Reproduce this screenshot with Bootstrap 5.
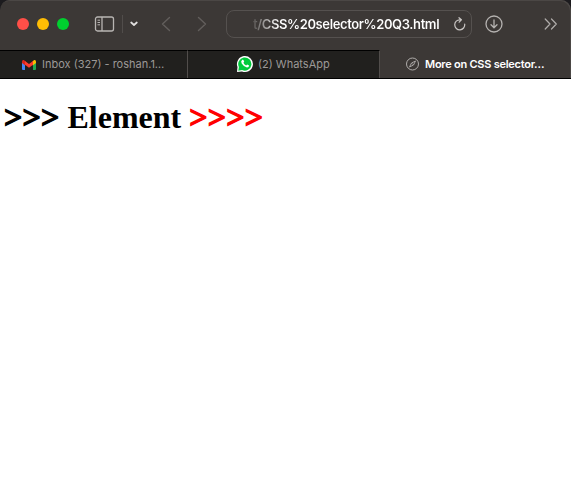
<!DOCTYPE html>
<html lang="en">
<head>
<meta charset="utf-8">
<meta name="viewport" content="width=device-width, initial-scale=1">
<title>More on CSS selector</title>
<link href="https://cdn.jsdelivr.net/npm/bootstrap@5.3.0/dist/css/bootstrap.min.css" rel="stylesheet">
<style>
body{font-family:Inter,"Liberation Sans",sans-serif;background:#fff;overflow:hidden}
svg{display:block;flex:none}
.shell{background:#1c1b1e}
.toolbar{height:50px;background:#3c3836;border-radius:10px 10px 0 0;padding:0 0 3px 17px;box-shadow:inset -1px 1px 0 #4b4745}
.dot{width:12px;height:12px;border-radius:50%;margin-right:8px}
.red{background:#ff4f48}.yellow{background:#ffbd04}.green{background:#00d02f}
.sidebar-icon{margin-left:16px}
.sep{width:1px;height:18px;background:#514d4b;margin-left:7px}
.chev{margin-left:7px}
.arrows{margin-left:-1px}
.address{width:246px;height:28px;border:1px solid #55514f;border-radius:8px;margin-left:19px;padding:0 5px 0 26px}
.url{font-size:13px;line-height:28px;font-weight:600;letter-spacing:-.39px;white-space:pre;color:transparent;background:linear-gradient(90deg,rgba(255,255,255,.12),#fff 26px);-webkit-background-clip:text;background-clip:text}
.down{margin-left:13px}
.more{margin-left:41px}
.tabs{height:29px;background:#3c3836;border-bottom:1px solid #000}
.tabitem{font-size:11px;line-height:27px;height:28px;color:#9c9997;white-space:pre}
.idle{background:#21201e;border-top:1px solid #000;border-right:1px solid #514d4b}
.label{margin-left:5px}
.t1{width:188px;padding-left:21px}
.t2{width:192px;padding-left:47px}
.t2 svg{margin:-1px 0 0 1px}
.t2 .label{margin-left:4px}
.t3{padding-left:26px;color:#fff;font-weight:600;padding-top:1px;border-right:1px solid #4b4745}
.t3 svg{margin-top:-2px}
.t3 .label{letter-spacing:-.25px}
.headline{font:bold 32px/37px "Liberation Serif","Times New Roman",serif;color:#000;margin:20px 0 0 4px;white-space:pre}
.gt{-webkit-text-stroke:1.3px currentColor;letter-spacing:.25px}
.after{color:#f00}
</style>
</head>
<body>
<header class="shell">
  <div class="toolbar d-flex align-items-center">
    <span class="dot red"></span><span class="dot yellow"></span><span class="dot green"></span>
    <svg class="sidebar-icon" width="22" height="16" viewBox="0 0 22 16" fill="none" stroke="#b8b5b3" stroke-width="1.3"><rect x="2.5" y="1" width="18" height="14" rx="2"/><path d="M9 1v14"/><path stroke-width="1" d="M4.5 4.2H7M4.5 6.5H7M4.5 8.8H7"/></svg>
    <span class="sep"></span>
    <svg class="chev" width="8" height="6" viewBox="0 0 8 6" fill="none" stroke="#e2e0df" stroke-width="1.7" stroke-linecap="round" stroke-linejoin="round"><path d="M1.2 1.5 4 4l2.8-2.5"/></svg>
    <svg class="arrows" width="70" height="16" viewBox="0 0 70 16" fill="none" stroke="#625e5c" stroke-width="1.4" stroke-linecap="round" stroke-linejoin="round"><path d="m32.5 1.5-7 6.5 7 6.5M61.5 1.5l7 6.5-7 6.5"/></svg>
    <div class="address d-flex align-items-center justify-content-between">
      <span class="url">t/CSS%20selector%20Q3.html</span>
      <svg width="12" height="14" viewBox="0 0 12 14" fill="none" stroke="#c8c5c3" stroke-width="1.2" stroke-linecap="round" stroke-linejoin="round"><path d="M10.7 7.2A5 5 0 1 1 6 2.8h1.2M5 .7l2.4 2.1L5.2 5.2"/></svg>
    </div>
    <svg class="down" width="18" height="18" viewBox="0 0 18 18" fill="none" stroke="#b5b2b0" stroke-width="1.3" stroke-linecap="round" stroke-linejoin="round"><circle cx="9" cy="9" r="8"/><path d="M9 5v7.5M6 9.7l3 3 3-3"/></svg>
    <svg class="more" width="14" height="12" viewBox="0 0 14 12" fill="none" stroke="#b0adab" stroke-width="1.2" stroke-linecap="round" stroke-linejoin="round"><path d="M1.2 1 6 6l-4.8 5M7.5 1l4.8 5-4.8 5"/></svg>
  </div>
  <nav class="tabs d-flex">
    <div class="tabitem idle t1 d-flex align-items-center">
      <svg width="16" height="12" viewBox="0 0 16 12"><path fill="#4285f4" d="M1 3v7q0 1 1 1h2V5z"/><path fill="#25a951" d="M15 3v7q0 1-1 1h-2V5z"/><path fill="#ffba00" d="M11.7 2.5 13 1q2-.5 2 1.5V4l-3.3 2.5z"/><path fill="#d9251b" d="M4.3 2.5 3 1Q1 .5 1 2.5V4l3.3 2.5z"/><path fill="#ff3c2e" d="m4 2 4 3 4-3v3.8l-4 3-4-3z"/></svg>
      <span class="label">Inbox (327) - roshan.1…</span>
    </div>
    <div class="tabitem idle t2 d-flex align-items-center">
      <svg width="18" height="18" viewBox="0 0 18 18"><path fill="#fff" d="M1 17 1.5 12A8 8 0 1 1 6 16.5z"/><path fill="#00ca3c" d="m2.3 15.7.6-3.7a6.6 6.6 0 1 1 3.2 3.1z"/><path fill="#fff" d="M6.2 4.8h.9q.3 0 .5.5l.6 1.5-.8 1q1 2 2.8 2.7l.9-1 2 1q-.1 1.9-2.1 1.9Q8 12 5.7 8.4 4.4 6.3 6.2 4.8z"/></svg>
      <span class="label">(2) WhatsApp</span>
    </div>
    <div class="tabitem t3 d-flex align-items-center flex-grow-1">
      <svg width="14" height="14" viewBox="0 0 14 14" fill="none" stroke="#b0adab"><circle cx="6.5" cy="7" r="6"/><path stroke-width=".9" d="m9.5 4-2 4-4 2 2-4z"/><path d="m5.8 6.3 1.4 1.4"/></svg>
      <span class="label">More on CSS selector…</span>
    </div>
  </nav>
</header>
<main><h1 class="headline"><span class="gt">&gt;&gt;&gt;</span> Element <span class="gt after">&gt;&gt;&gt;&gt;</span></h1></main>
<script src="https://cdn.jsdelivr.net/npm/bootstrap@5.3.0/dist/js/bootstrap.bundle.min.js"></script>
</body>
</html>
